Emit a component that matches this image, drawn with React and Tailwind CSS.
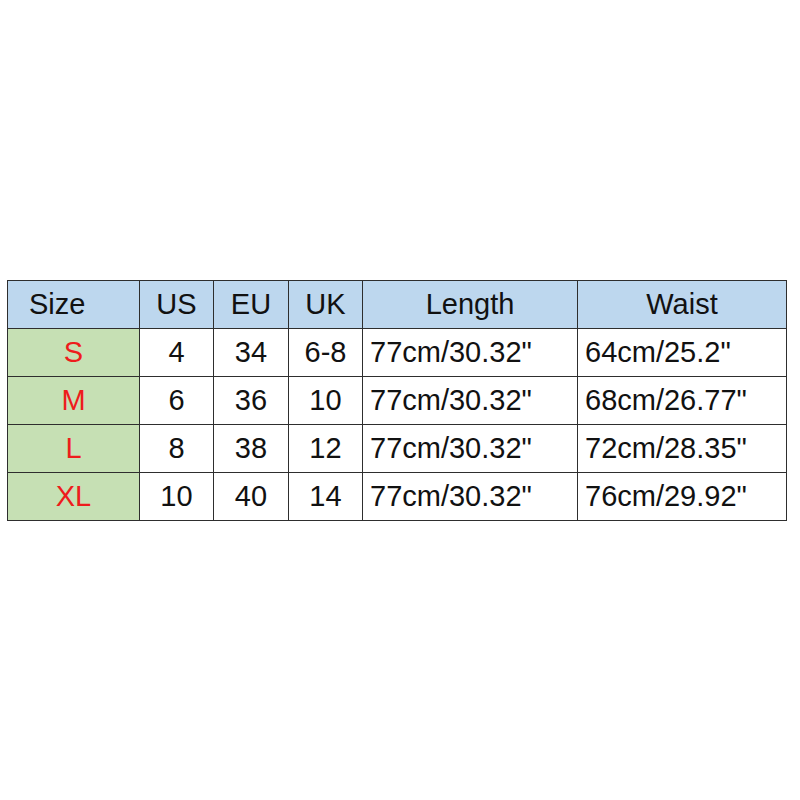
const headers = ["Size", "US", "EU", "UK", "Length", "Waist"];

const rows = [
  ["S", "4", "34", "6-8", "77cm/30.32\"", "64cm/25.2\""],
  ["M", "6", "36", "10", "77cm/30.32\"", "68cm/26.77\""],
  ["L", "8", "38", "12", "77cm/30.32\"", "72cm/28.35\""],
  ["XL", "10", "40", "14", "77cm/30.32\"", "76cm/29.92\""],
];

export default function App() {
  return (
    <div
      className="w-[800px] h-[800px] bg-white pt-[280px] pl-[7px]"
      style={{ fontFamily: '"Liberation Sans", Arial, sans-serif' }}
    >
      <div className="grid grid-cols-[132px_74px_75px_74px_215px_209px] w-fit border-l border-t border-[#2e2e2e] text-[29px] leading-none text-[#111]">
        {headers.map((h, i) => (
          <div
            key={h}
            className={`h-[48px] flex items-center bg-[#bdd7ee] border-r border-b border-[#2e2e2e] ${
              i === 0 ? "justify-start pl-[21px]" : "justify-center"
            }`}
          >
            {h}
          </div>
        ))}
        {rows.map((row) =>
          row.map((cell, i) => {
            if (i === 0) {
              return (
                <div
                  key={row[0] + i}
                  className="h-[48px] flex items-center justify-center bg-[#c6e0b4] text-[#ee1c1c] border-r border-b border-[#2e2e2e]"
                >
                  {cell}
                </div>
              );
            }
            const wide = i >= 4;
            return (
              <div
                key={row[0] + i}
                className={`h-[48px] flex items-center border-r border-b border-[#2e2e2e] ${
                  wide ? "justify-start pl-[7px]" : "justify-center"
                }`}
              >
                {cell}
              </div>
            );
          })
        )}
      </div>
    </div>
  );
}
